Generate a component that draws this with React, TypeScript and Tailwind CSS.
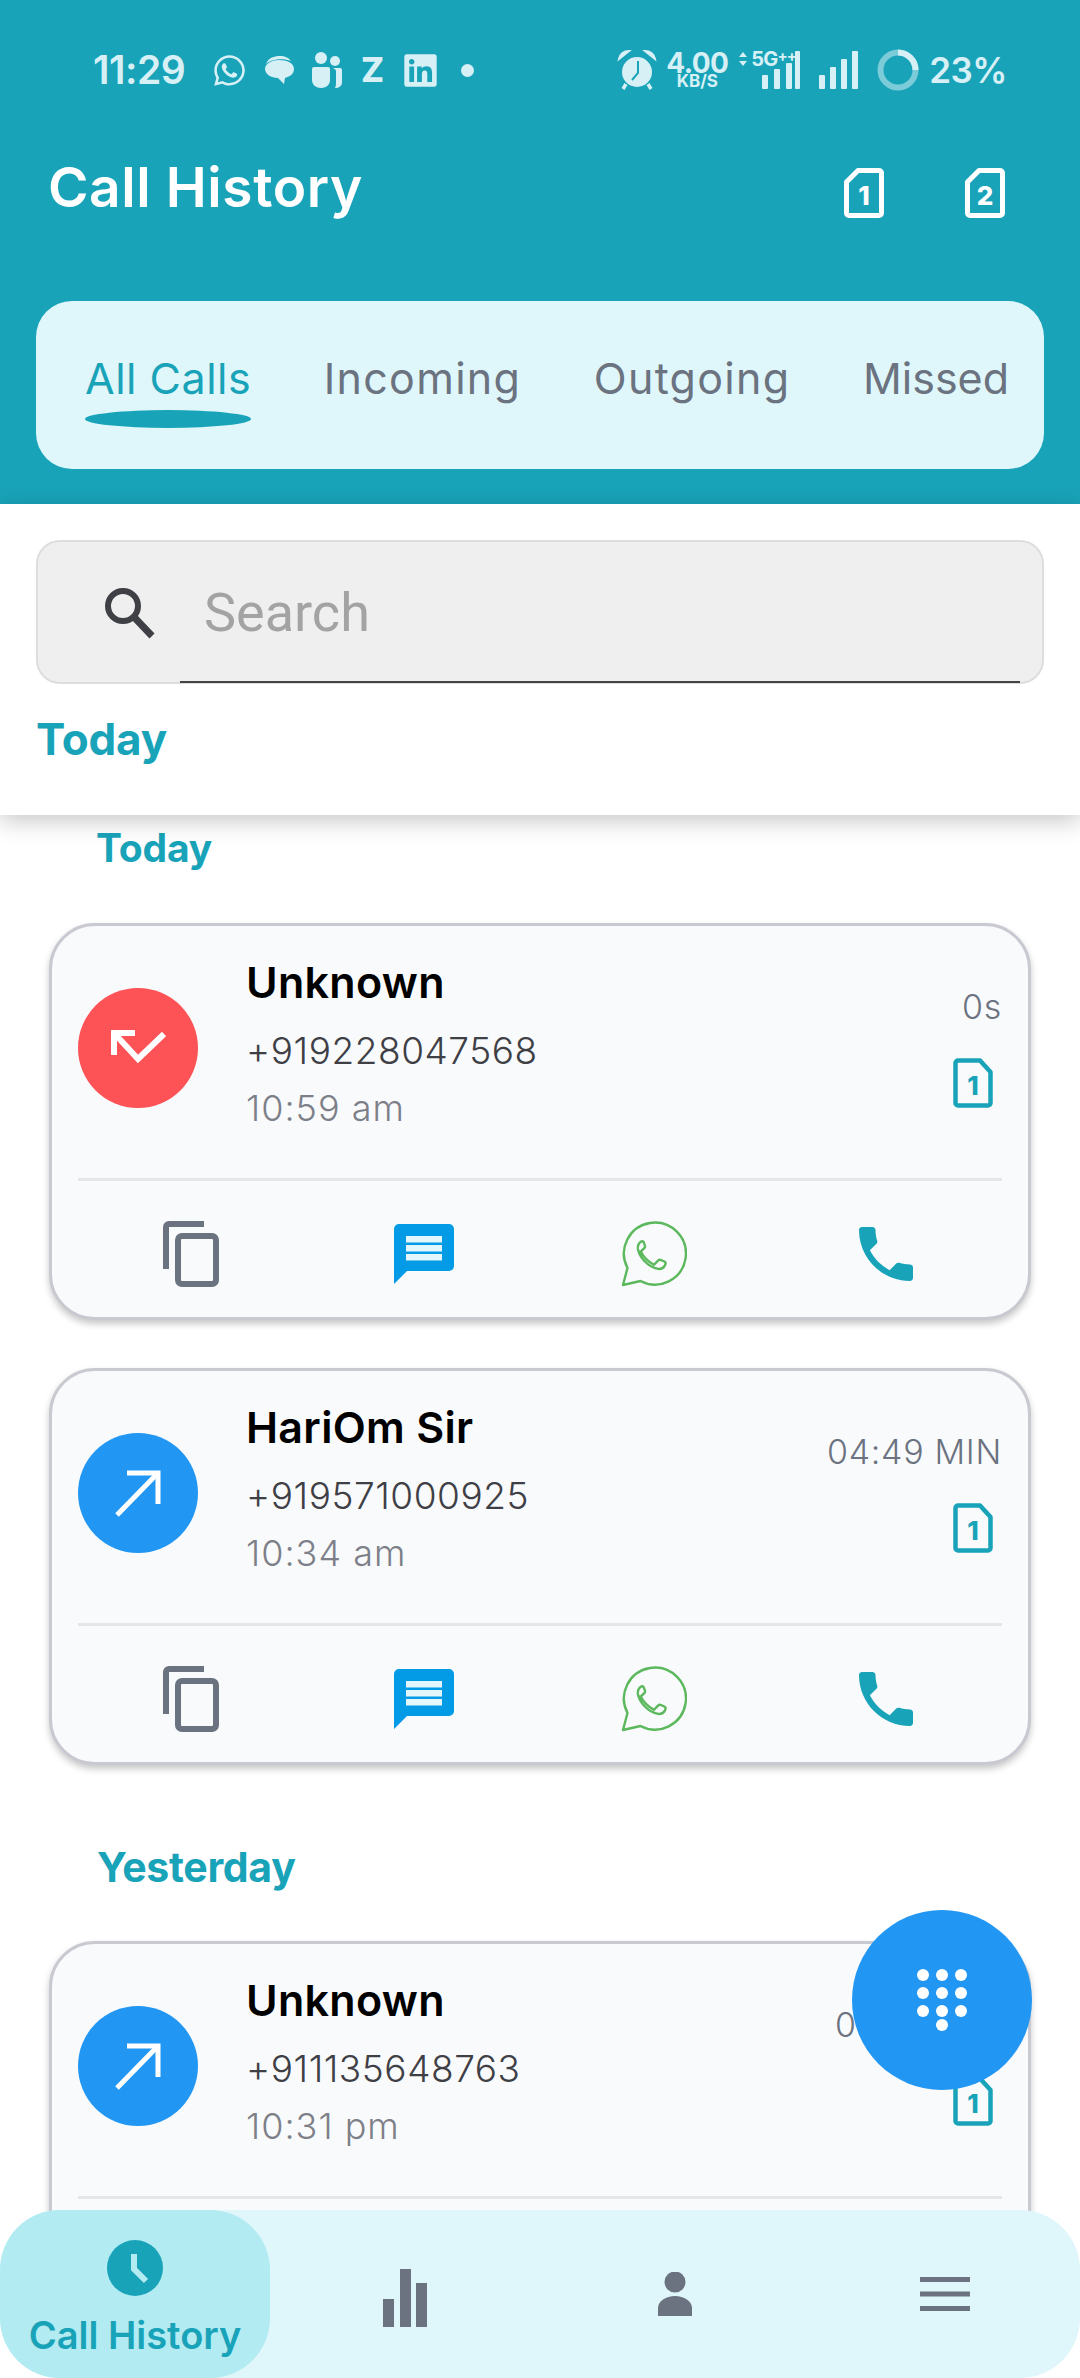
import React from "react";
import { FaWhatsapp, FaLinkedin } from "react-icons/fa";

const FONT = "font-['Inter','Noto_Sans',sans-serif]";

function Sim({ n, color, flip = false }: { n: string; color: string; flip?: boolean }) {
  const d = flip
    ? "M5 2.5H27L37.5 14V45a2.5 2.5 0 0 1-2.5 2.5H5A2.5 2.5 0 0 1 2.5 45V5A2.5 2.5 0 0 1 5 2.5Z"
    : "M14 2.5H35A2.5 2.5 0 0 1 37.5 5V45A2.5 2.5 0 0 1 35 47.5H5A2.5 2.5 0 0 1 2.5 45V14Z";
  return (
    <svg width={40} height={50} viewBox="0 0 40 50" className="block shrink-0">
      <path d={d} fill="none" stroke={color} strokeWidth={flip ? 4.5 : 5} strokeLinejoin="round" />
      <text x="20" y="37" textAnchor="middle" fontSize="26" fontWeight="800" fill={color} fontFamily="Inter, sans-serif">{n}</text>
    </svg>
  );
}

function CopyIcon() {
  return (
    <svg width="56" height="66" viewBox="0 0 56 66">
      <path d="M3 48V6a3 3 0 0 1 3-3H41" fill="none" stroke="#6b7280" strokeWidth="6" />
      <rect x="15" y="15" width="38" height="48" rx="4" fill="none" stroke="#6b7280" strokeWidth="6" />
    </svg>
  );
}

function MsgIcon() {
  return (
    <svg width="60" height="60" viewBox="0 0 60 60">
      <path d="M5 0H55a5 5 0 0 1 5 5V42a5 5 0 0 1-5 5H13L0 60V5a5 5 0 0 1 5-5Z" fill="#039be5" />
      <rect x="12" y="12" width="36" height="6.5" fill="#e3f6fc" />
      <rect x="12" y="21" width="36" height="6.5" fill="#e3f6fc" />
      <rect x="12" y="30" width="36" height="6.5" fill="#e3f6fc" />
    </svg>
  );
}

function WaIcon() {
  return (
    <svg width="66" height="66" viewBox="0 0 66 66">
      <path d="M2 64L6.5 47A31 31 0 1 1 19.5 60Z" fill="none" stroke="#5cb85c" strokeWidth="2.4" strokeLinejoin="round" />
      <g transform="translate(6.5 9) scale(2)">
        <path d="M6.62 10.79c1.44 2.83 3.76 5.14 6.59 6.59l2.2-2.2c.27-.27.67-.36 1.02-.24 1.12.37 1.6.5 2.2.9.55.3.4 1.2.1 1.8-.8 1.4-2 2-3.4 1.8C10 18.5 6 13.5 5.2 9.5 5 8 5.6 6.6 6.8 5.8c.5-.3 1-.3 1.2.2.3.8.6 1.4.75 1.9.11.35.03.74-.25 1.02z" fill="none" stroke="#5cb85c" strokeWidth="1.2" />
      </g>
    </svg>
  );
}

function PhoneIcon() {
  return (
    <svg width="54" height="54" viewBox="3 3 18 18">
      <path d="M6.62 10.79c1.44 2.83 3.76 5.14 6.59 6.59l2.2-2.2c.27-.27.67-.36 1.02-.24 1.12.37 2.33.57 3.57.57.55 0 1 .45 1 1V20c0 .55-.45 1-1 1-9.39 0-17-7.61-17-17 0-.55.45-1 1-1h3.5c.55 0 1 .45 1 1 0 1.25.2 2.45.57 3.57.11.35.03.74-.25 1.02l-2.2 2.2z" fill="#19a3b9" />
    </svg>
  );
}

function InArrow() {
  return (
    <svg width="56" height="34" viewBox="0 0 56 34" className="mb-[2px]">
      <path d="M4 3L28 29L54 4" fill="none" stroke="#fff" strokeWidth="6" />
      <path d="M4 25V3H25" fill="none" stroke="#fff" strokeWidth="6" />
    </svg>
  );
}

function OutArrow() {
  return (
    <svg width="50" height="50" viewBox="0 0 50 50">
      <path d="M4 47L44 6" fill="none" stroke="#fff" strokeWidth="5" />
      <path d="M14 5H45V36" fill="none" stroke="#fff" strokeWidth="5" />
    </svg>
  );
}

type CardProps = { name: string; phone: string; time: string; dur: string; kind: "in" | "out" };

function Card({ name, phone, time, dur, kind }: CardProps) {
  return (
    <div className="h-[397px] shrink-0 rounded-[46px] border-[3px] border-[#c9c9d1] bg-[#f9fafc] shadow-[0_4px_7px_rgba(0,0,0,0.22)]">
      <div className="mx-[26px] flex h-[255px] items-start border-b-[3px] border-[#e5e6ea]">
        <div className={`mt-[62px] flex h-[120px] w-[120px] shrink-0 items-center justify-center rounded-full ${kind === "in" ? "bg-[#fd5356]" : "bg-[#2196f3]"}`}>
          {kind === "in" ? <InArrow /> : <OutArrow />}
        </div>
        <div className="ml-[48px] flex flex-1 flex-col pt-[26px]">
          <div className="h-[60px] text-[43px] font-semibold leading-[60px] tracking-[0.3px] text-black">{name}</div>
          <div className="mt-[12px] h-[54px] text-[37px] font-light leading-[54px] tracking-[0.55px] text-[#3f3f46]">{phone}</div>
          <div className="h-[60px] text-[36px] font-light leading-[60px] tracking-[1px] text-[#7d8088]">{time}</div>
        </div>
        <div className="flex flex-col items-end pt-[54px]">
          <div className="h-[54px] text-[34px] font-light leading-[54px] tracking-[0.7px] text-[#6b7280]">{dur}</div>
          <div className="mr-[9px] mt-[24px]"><Sim n="1" color="#19a3b9" flip /></div>
        </div>
      </div>
      <div className="grid h-[136px] grid-cols-4 items-center px-[22px] pt-[10px]">
        <div className="flex justify-center"><CopyIcon /></div>
        <div className="flex justify-center"><MsgIcon /></div>
        <div className="flex justify-center pr-[6px]"><WaIcon /></div>
        <div className="flex justify-center pr-[8px]"><PhoneIcon /></div>
      </div>
    </div>
  );
}

function StatusBar() {
  const c = "#d6f0f6";
  return (
    <div className="flex h-[40px] items-center justify-between pl-[93px] pr-[73px] text-[#d6f0f6]">
      <div className="flex items-center">
        <span className="w-[91px] text-[39px] font-semibold leading-[40px] tracking-[-0.5px]">11:29</span>
        <FaWhatsapp className="ml-[28px] text-[#d6f0f6]" size={35} />
        <svg className="ml-[16px]" width="32" height="28" viewBox="0 0 32 28">
          <path d="M3 8C5 2 11 0 17 0c5 0 9 2 11 5C20 2 8 3 3 8Z" fill={c} />
          <path d="M16 4c8 0 15 3 15 9s-6 8-9 9l-1 6-6-6C8 22 2 18 2 13S8 4 16 4Z" fill={c} />
        </svg>
        <svg className="ml-[15px]" width="32" height="36" viewBox="0 0 32 36">
          <circle cx="11" cy="6" r="6" fill={c} />
          <circle cx="25" cy="9" r="5" fill={c} />
          <path d="M2 17a2 2 0 0 1 2-2h14a2 2 0 0 1 2 2v11c0 4-3 8-9 8s-9-4-9-8Z" fill={c} />
          <path d="M23 16h7a2 2 0 0 1 2 2v12c0 4-3 6-7 6 1-2 1-4 1-7V19c0-1-1-2-3-3Z" fill={c} />
        </svg>
        <span className="ml-[19px] w-[22px] text-[34px] font-extrabold leading-[36px]">Z</span>
        <FaLinkedin className="ml-[19px] text-[#d6f0f6]" size={37} />
        <span className="ml-[22px] h-[13px] w-[13px] rounded-full bg-[#d6f0f6]" />
      </div>
      <div className="flex items-center">
        <svg width="40" height="40" viewBox="0 0 40 40">
          <path d="M2 9C3 4 7 1 12 1ZM38 9C37 4 33 1 28 1Z" fill={c} stroke={c} strokeWidth="2" />
          <circle cx="20" cy="22" r="15" fill={c} />
          <path d="M21 11L21 23L15 30" fill="none" stroke="#19a3b9" strokeWidth="2" />
          <path d="M9 34L6 39M31 34L34 39" stroke={c} strokeWidth="3.5" />
        </svg>
        <div className="ml-[10px] flex w-[60px] flex-col items-center">
          <span className="h-[22px] text-[28px] font-bold leading-[22px] tracking-[-0.6px]">4.00</span>
          <span className="h-[14px] text-[17px] font-bold leading-[14px]">KB/S</span>
        </div>
        <div className="relative ml-[11px] h-[38px] w-[62px]">
          <svg className="absolute left-0 top-0" width="62" height="38" viewBox="0 0 62 38">
            <path d="M5 1L9 6H1ZM5 15L9 10H1Z" fill={c} />
            <rect x="24" y="24" width="6" height="14" rx="1" fill={c} />
            <rect x="36" y="18" width="6" height="20" rx="1" fill={c} />
            <rect x="48" y="12" width="6" height="26" rx="1" fill={c} />
            <rect x="57" y="0" width="5" height="38" rx="1" fill={c} />
          </svg>
          <span className="absolute left-[13px] top-[-1px] flex items-start text-[20px] font-bold leading-[18px] tracking-[-0.8px]">5G<span className="text-[15px] leading-[12px]">++</span></span>
        </div>
        <svg className="ml-[19px]" width="39" height="38" viewBox="0 0 39 38">
          <rect x="0" y="24" width="6" height="14" rx="1" fill={c} />
          <rect x="11" y="16" width="6" height="22" rx="1" fill={c} />
          <rect x="22" y="8" width="6" height="30" rx="1" fill={c} />
          <rect x="33" y="0" width="6" height="38" rx="1" fill={c} />
        </svg>
        <svg className="ml-[19px]" width="42" height="42" viewBox="0 0 42 42">
          <circle cx="21" cy="21" r="17.5" fill="none" stroke="#7ccbd8" strokeWidth="6" />
          <path d="M21 3.5A17.5 17.5 0 0 1 38.5 21" fill="none" stroke={c} strokeWidth="6" />
        </svg>
        <span className="ml-[10px] text-[35px] font-semibold leading-[40px] tracking-[-0.5px]">23%</span>
      </div>
    </div>
  );
}

function Tab({ label, active, tracking }: { label: string; active?: boolean; tracking: string }) {
  return (
    <div className="relative">
      <span className={`block text-[43px] font-normal leading-[48px] ${tracking} ${active ? "text-[#19a3b9]" : "text-[#6b7280]"}`}>{label}</span>
      {active && <span className="absolute left-0 right-0 top-[56px] h-[18px] rounded-[50%] bg-[#19a3b9]" />}
    </div>
  );
}

export default function App() {
  return (
    <div className={`${FONT} relative h-[2378px] w-[1080px] overflow-hidden bg-white`}>
      <header className="flex h-[504px] flex-col bg-[#19a3b9] pt-[50px]">
        <StatusBar />
        <div className="mt-[52px] flex h-[90px] items-center justify-between pl-[48px] pr-[75px]">
          <h1 className="text-[55px] font-semibold leading-[70px] tracking-[0.6px] text-white">Call History</h1>
          <div className="mt-[12px] flex gap-[81px]">
            <Sim n="1" color="#fff" />
            <Sim n="2" color="#fff" />
          </div>
        </div>
        <div className="mx-[36px] mt-[69px] flex h-[168px] items-start justify-between rounded-[36px] bg-[#dff7fa] pl-[49px] pr-[35px] pt-[53px]">
          <Tab label="All Calls" active tracking="tracking-[0.5px]" />
          <Tab label="Incoming" tracking="tracking-[1.3px]" />
          <Tab label="Outgoing" tracking="tracking-[1.3px]" />
          <Tab label="Missed" tracking="tracking-[0px]" />
        </div>
      </header>

      <section className="relative z-10 h-[311px] bg-white px-[36px] pt-[36px] shadow-[0_6px_22px_rgba(0,0,0,0.22)]">
        <div className="relative flex h-[144px] items-center rounded-[24px] border-[2px] border-[#dddddd] bg-[#efefef] pl-[64px]">
          <svg width="54" height="54" viewBox="0 0 54 54">
            <circle cx="21" cy="21" r="15" fill="none" stroke="#3f3f46" strokeWidth="6" />
            <path d="M32 32L50 51" stroke="#3f3f46" strokeWidth="7" />
          </svg>
          <span className="ml-[48px] pt-[2px] font-['Roboto',sans-serif] text-[54px] leading-[60px] text-[#a3a3a3]">Search</span>
          <div className="absolute bottom-[-1px] left-[142px] right-[22px] h-[2px] bg-[#444]" />
        </div>
        <div className="mt-[27px] text-[44px] font-bold leading-[56px] tracking-[-0.2px] text-[#19a3b9]">Today</div>
      </section>

      <main className="flex flex-col px-[49px]">
        <div className="ml-[47px] mt-[11px] text-[39px] font-bold leading-[44px] tracking-[-0.2px] text-[#19a3b9]">Today</div>
        <div className="mt-[53px] flex flex-col gap-[48px]">
          <Card name="Unknown" phone="+919228047568" time="10:59 am" dur="0s" kind="in" />
          <Card name="HariOm Sir" phone="+919571000925" time="10:34 am" dur="04:49 MIN" kind="out" />
        </div>
        <div className="ml-[48px] mt-[80px] text-[41px] font-bold leading-[44px] tracking-[-0.3px] text-[#19a3b9]">Yesterday</div>
        <div className="mt-[52px]">
          <Card name="Unknown" phone="+911135648763" time="10:31 pm" dur="00:41 MIN" kind="out" />
        </div>
      </main>

      <button className="absolute left-[852px] top-[1910px] z-20 flex h-[180px] w-[180px] items-center justify-center rounded-full bg-[#2196f3]">
        <svg width="50" height="62" viewBox="0 0 50 62" fill="#fff">
          {[0, 1, 2].flatMap((r) =>
            [0, 1, 2].map((c) => <ellipse key={`${r}${c}`} cx={6 + c * 19} cy={6 + r * 18} rx="6" ry="6" />)
          )}
          <ellipse cx="25" cy="56" rx="6" ry="6" />
        </svg>
      </button>

      <nav className="absolute bottom-0 left-0 z-20 flex h-[168px] w-[1080px] items-stretch rounded-[60px] bg-[#dff6fa]">
        <div className="flex w-[270px] flex-col items-center rounded-[60px] bg-[#b2ebf2] pt-[30px]">
          <svg width="56" height="56" viewBox="0 0 56 56">
            <circle cx="28" cy="28" r="28" fill="#19a3b9" />
            <path d="M27 14V29L39 41" fill="none" stroke="#b2ebf2" strokeWidth="6" />
          </svg>
          <span className="mt-[15px] text-[38px] font-semibold leading-[48px] text-[#19a3b9]">Call History</span>
        </div>
        <div className="flex w-[270px] justify-center pt-[59px]">
          <svg width="44" height="58" viewBox="0 0 44 58" fill="#6b7280">
            <rect x="0" y="30" width="11" height="28" />
            <rect x="17" y="0" width="11" height="58" />
            <rect x="33" y="14" width="11" height="44" />
          </svg>
        </div>
        <div className="flex w-[270px] justify-center pt-[62px]">
          <svg width="34" height="44" viewBox="0 0 34 44" fill="#6b7280">
            <circle cx="17" cy="10" r="10.5" />
            <path d="M0 44V36C0 29 8 24 17 24s17 5 17 12v8Z" />
          </svg>
        </div>
        <div className="flex w-[270px] justify-center pt-[67px]">
          <svg width="50" height="34" viewBox="0 0 50 34" fill="#6b7280">
            <rect y="0" width="50" height="5" />
            <rect y="14.5" width="50" height="5" />
            <rect y="29" width="50" height="5" />
          </svg>
        </div>
      </nav>
    </div>
  );
}
